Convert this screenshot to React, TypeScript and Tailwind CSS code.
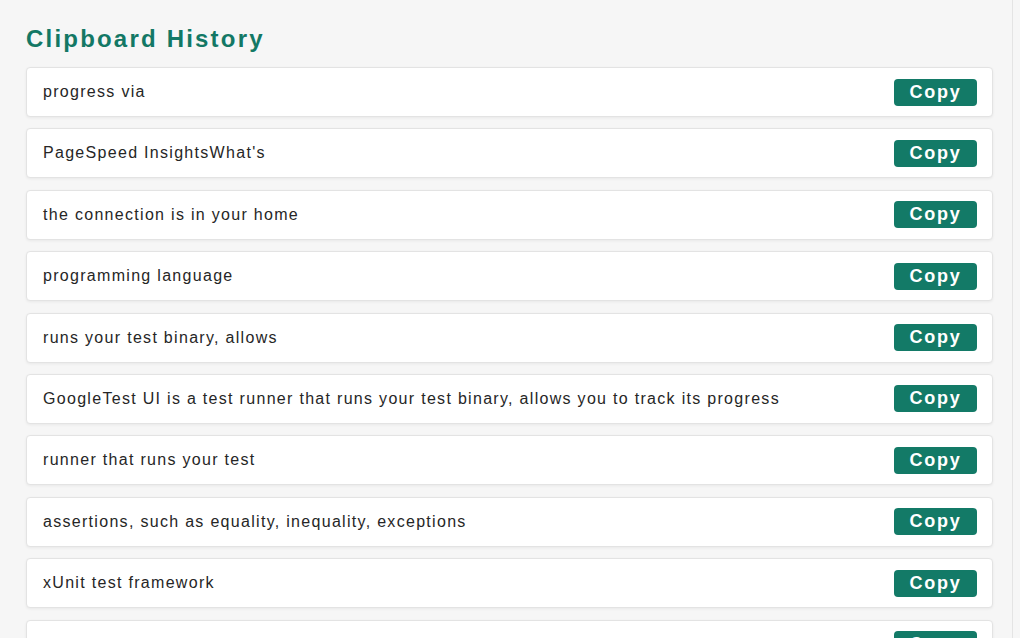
const items = [
  'progress via',
  "PageSpeed InsightsWhat's",
  'the connection is in your home',
  'programming language',
  'runs your test binary, allows',
  'GoogleTest UI is a test runner that runs your test binary, allows you to track its progress',
  'runner that runs your test',
  'assertions, such as equality, inequality, exceptions',
  'xUnit test framework',
  'test discovery',
];

export default function App() {
  return (
    <div className="h-[638px] w-[1020px] overflow-hidden bg-[#f6f6f6] font-['Liberation_Sans',Arial,sans-serif]">
      <div className="h-full w-[1013px] border-r border-[#e4e4e4] pl-[26px] pr-[19px] pt-[27px]">
        <h1 className="mb-[16px] h-[24px] text-[24px] font-bold leading-[24px] tracking-[2.2px] text-[#137865]">
          Clipboard History
        </h1>
        <div className="flex flex-col gap-[11.4px]">
          {items.map((text, i) => (
            <div
              key={i}
              className="flex h-[50px] shrink-0 items-center justify-between rounded-[4px] border border-[#e3e3e3] bg-white pl-[16px] pr-[15px] shadow-[0_1px_3px_rgba(0,0,0,0.06)]"
            >
              <span className="text-[16px] tracking-[1.3px] text-[#262626]">{text}</span>
              <button className="flex h-[27px] w-[83px] items-center justify-center rounded-[4px] bg-[#137a67] text-[18px] font-bold tracking-[1.8px] text-white">
                Copy
              </button>
            </div>
          ))}
        </div>
      </div>
    </div>
  );
}
